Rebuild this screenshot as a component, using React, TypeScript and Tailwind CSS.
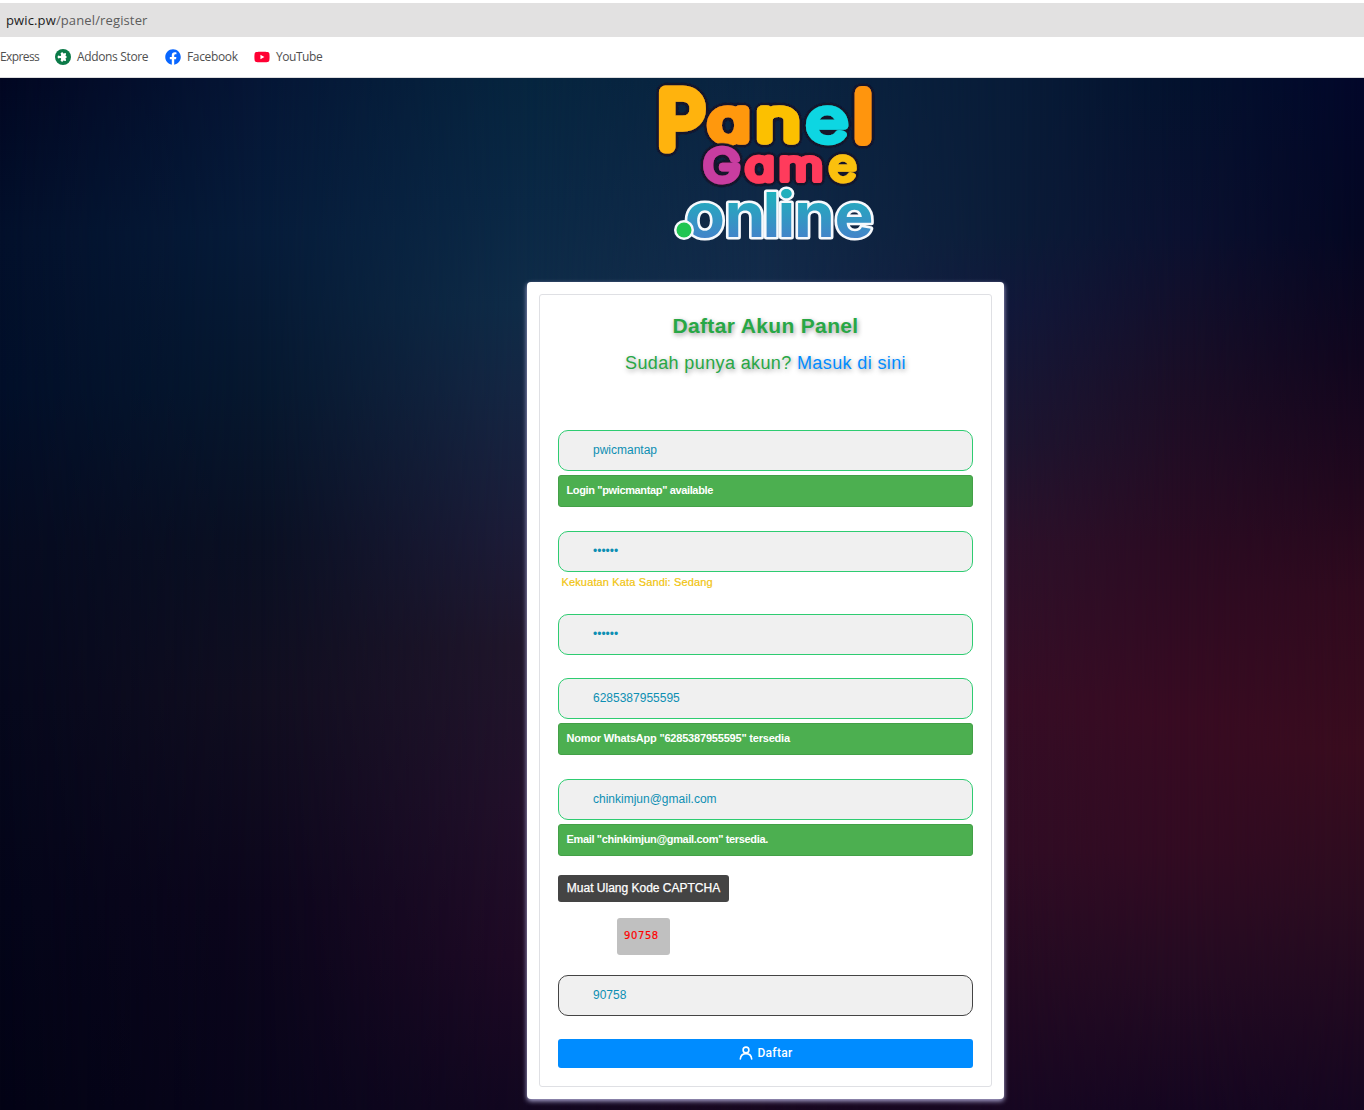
import { FaFacebook, FaYoutube } from "react-icons/fa";
import { MdExtension } from "react-icons/md";

type GlyphProps = {
  char: string;
  x: number;
  y: number;
  size: number;
  color: string;
  stroke: number;
  stretch: number;
};

const panelGlyphs: GlyphProps[] = [
  { char: "P", x: 36, y: 69, size: 76, color: "#ffb30c", stroke: 13, stretch: 1 },
  { char: "a", x: 84, y: 62, size: 55, color: "#ff980a", stroke: 11, stretch: 1.25 },
  { char: "n", x: 133, y: 62, size: 55, color: "#fcc006", stroke: 11, stretch: 1.34 },
  { char: "e", x: 182, y: 63, size: 59, color: "#08d6e2", stroke: 8.5, stretch: 1.22 },
  { char: "l", x: 218, y: 61, size: 63, color: "#ff9508", stroke: 14, stretch: 1 },
];

const gameGlyphs: GlyphProps[] = [
  { char: "G", x: 77, y: 103, size: 43, color: "#c83ca0", stroke: 7.5, stretch: 1.14 },
  { char: "a", x: 115, y: 102, size: 40, color: "#ff3b5c", stroke: 7, stretch: 1.22 },
  { char: "m", x: 156, y: 102, size: 40, color: "#ff3b5c", stroke: 7, stretch: 1.26 },
  { char: "e", x: 197.5, y: 102, size: 41, color: "#fbc00a", stroke: 6, stretch: 1.15 },
];

const onlineGlyphs = [
  { char: "o", x: 60, y: 159 },
  { char: "n", x: 100, y: 159 },
  { char: "l", x: 126.5, y: 159 },
  { char: "i", x: 141.5, y: 159 },
  { char: "n", x: 169.5, y: 159 },
  { char: "e", x: 209, y: 159 },
];

// each layer fades in from left to right over the one before it
const backdropLayers = [
  "bg-[linear-gradient(#020722_0%,#03102b_15%,#020f29_30%,#060b20_45%,#06081c_60%,#040519_80%,#030315_100%)]",
  "bg-[linear-gradient(#051636_0%,#061c3a_15%,#06182f_30%,#0a1023_45%,#110e20_60%,#0c061c_80%,#08051a_100%)] [mask-image:linear-gradient(to_right,transparent_0px,#000_260px)]",
  "bg-[linear-gradient(#06253f_0%,#0a2845_12%,#0f2c48_22%,#152744_30%,#1d1c38_45%,#20162b_55%,#22102a_70%,#1f0a25_85%,#120720_100%)] [mask-image:linear-gradient(to_right,transparent_260px,#000_527px)]",
  "bg-[linear-gradient(#0a2441_0%,#132b4a_20%,#1c1c38_45%,#2c112a_70%,#180820_100%)] [mask-image:linear-gradient(to_right,transparent_527px,#000_765px)]",
  "bg-[linear-gradient(#081c38_0%,#0b1c38_15%,#11183a_22%,#1d1530_35%,#2c112a_45%,#360d25_60%,#300c24_75%,#240a22_87%,#170722_100%)] [mask-image:linear-gradient(to_right,transparent_765px,#000_1010px)]",
  "bg-[linear-gradient(#03122e_0%,#0b1130_15%,#1b0e26_30%,#2a0b22_45%,#380b22_62%,#320b22_75%,#240b22_87%,#150620_100%)] [mask-image:linear-gradient(to_right,transparent_1010px,#000_1180px)]",
  "bg-[linear-gradient(#02072a_0%,#040722_15%,#10061e_27%,#21081d_40%,#300a1e_50%,#390c1e_65%,#2a0c20_80%,#150620_100%)] [mask-image:linear-gradient(to_right,transparent_1180px,#000_1364px)]",
];

function Glyph({ glyph }: { glyph: GlyphProps }) {
  return (
    <text
      transform={`translate(${glyph.x} ${glyph.y}) scale(${glyph.stretch} 1)`}
      textAnchor="middle"
      fontSize={glyph.size}
      fill={glyph.color}
      stroke={glyph.color}
      strokeWidth={glyph.stroke}
      strokeLinejoin="round"
      vectorEffect="non-scaling-stroke"
    >
      {glyph.char}
    </text>
  );
}

function Logo() {
  return (
    <svg
      width="240"
      height="172"
      viewBox="0 0 240 172"
      className="font-['Inter',sans-serif] [font-feature-settings:'cv11']"
    >
      <defs>
        <linearGradient
          id="online"
          gradientUnits="userSpaceOnUse"
          x1="0"
          y1="-44"
          x2="0"
          y2="0"
        >
          <stop offset="0" stopColor="#1fb0bc" />
          <stop offset="1" stopColor="#4285c9" />
        </linearGradient>
        {/* rounded dark rim behind the coloured letters */}
        <filter id="rim" x="-10%" y="-20%" width="120%" height="140%">
          <feGaussianBlur in="SourceAlpha" stdDeviation="2" result="soft" />
          <feComponentTransfer in="soft" result="grown">
            <feFuncA type="linear" slope="8" intercept="-0.4" />
          </feComponentTransfer>
          <feFlood floodColor="#12132c" />
          <feComposite in2="grown" operator="in" result="outline" />
          <feMerge>
            <feMergeNode in="outline" />
            <feMergeNode in="SourceGraphic" />
          </feMerge>
        </filter>
      </defs>
      <g filter="url(#rim)" className="font-extralight [color-interpolation-filters:sRGB]">
        {panelGlyphs.map((g) => (
          <Glyph key={g.x} glyph={g} />
        ))}
      </g>
      <g filter="url(#rim)" className="font-extralight [color-interpolation-filters:sRGB]">
        {gameGlyphs.map((g) => (
          <Glyph key={g.x} glyph={g} />
        ))}
      </g>
      <g className="font-bold" fontSize="62" paintOrder="stroke">
        {onlineGlyphs.map((g) => (
          <text
            key={g.x}
            transform={`translate(${g.x} ${g.y}) scale(1.06 1)`}
            textAnchor="middle"
            fill="url(#online)"
            stroke="#f6f9fc"
            strokeWidth="5"
            strokeLinejoin="round"
          >
            {g.char}
          </text>
        ))}
      </g>
      <circle cx="39" cy="152" r="10" fill="#f6f9fc" />
      <circle cx="39" cy="152" r="7.5" fill="#1fc551" />
    </svg>
  );
}

function BrowserBar() {
  return (
    <header className="flex flex-col bg-white pt-[3px] font-['Open_Sans',sans-serif]">
      <div className="flex h-[34px] items-center bg-[#e2e1e1] pt-px pl-1.5 text-[13px] tracking-[0.13px] text-[#5c5c5c]">
        <span className="text-[#1c1c1c]">pwic.pw</span>/panel/register
      </div>
      <nav className="flex h-[41px] items-center border-b border-[#dddddf] text-xs tracking-[-0.35px] text-[#505050]">
        <span className="w-[55px] tracking-[-0.6px]">Express</span>
        <span className="flex w-[110px] items-center gap-1.5">
          <span className="flex size-4 items-center justify-center rounded-full bg-[#0b7a48]">
            <MdExtension className="size-2.5 rotate-45 text-white" />
          </span>
          Addons Store
        </span>
        <span className="flex w-[89px] items-center gap-1.5">
          <FaFacebook className="size-4 text-[#0866ff]" />
          Facebook
        </span>
        <span className="flex items-center gap-1.5 tracking-[-0.45px]">
          <FaYoutube className="size-4 text-[#ff0033]" />
          YouTube
        </span>
      </nav>
    </header>
  );
}

function Field({ value, type = "text", border = "border-[#2ecc71]" }: {
  value: string;
  type?: string;
  border?: string;
}) {
  return (
    <input
      type={type}
      defaultValue={value}
      className={`block h-[41px] w-full rounded-[10px] border bg-[#f0f0f0] pr-3 pb-0.5 pl-[34px] text-xs text-[#0d8fb3] outline-none ${border}`}
    />
  );
}

function Notice({ text, tracking }: { text: string; tracking: string }) {
  return (
    <p
      className={`mt-1 flex h-8 items-center rounded-[3px] border border-[#43a047] bg-[#4caf50] px-[7.5px] pb-px text-[11px] font-bold text-white ${tracking}`}
    >
      {text}
    </p>
  );
}

export default function App() {
  return (
    <div className="flex h-[1110px] w-[1364px] flex-col overflow-hidden">
      <BrowserBar />
      <main className="relative isolate flex flex-1 flex-col bg-[#030315] font-['Liberation_Sans',sans-serif]">
        {backdropLayers.map((layer) => (
          <div key={layer} className={`absolute inset-0 -z-10 ${layer}`} />
        ))}
        <div className="ml-[645px] h-[204px]">
          <Logo />
        </div>
        <section className="ml-[527px] h-[817px] w-[477px] rounded bg-white p-3 shadow-[0_2px_5px_#b4b0dc]">
          <form className="h-[793px] rounded-[3px] border border-[#dfe0e4] px-[18px]">
            <h1 className="mt-[18px] text-center text-[21px] leading-[26px] font-bold tracking-[0.35px] text-[#28a745] [text-shadow:1px_2px_5px_#00000066]">
              Daftar Akun Panel
            </h1>
            <p className="mt-3 mb-[54px] text-center text-lg leading-[25px] tracking-[0.38px] text-[#28a745] [text-shadow:1px_2px_5px_#00000066]">
              Sudah punya akun? <a className="text-[#008cff]">Masuk di sini</a>
            </p>
            <Field value="pwicmantap" />
            <Notice
              text={'Login "pwicmantap" available'}
              tracking="tracking-[-0.36px]"
            />
            <div className="mt-6">
              <Field value="123456" type="password" />
              <p className="h-[42px] pt-1 pl-[3.5px] text-[11px] leading-[13px] tracking-[0.14px] text-[#f1c40f] [-webkit-text-stroke:0.2px]">
                Kekuatan Kata Sandi: Sedang
              </p>
            </div>
            <Field value="123456" type="password" />
            <div className="mt-[23px]">
              <Field value="6285387955595" />
              <Notice
                text={'Nomor WhatsApp "6285387955595" tersedia'}
                tracking="tracking-[-0.2px]"
              />
            </div>
            <div className="mt-6">
              <Field value="chinkimjun@gmail.com" />
              <Notice
                text={'Email "chinkimjun@gmail.com" tersedia.'}
                tracking="tracking-[-0.34px]"
              />
            </div>
            <button
              type="button"
              className="mt-[19px] block h-[27px] w-[171px] rounded-[3px] bg-[#444] pb-0.5 text-xs whitespace-nowrap text-white [-webkit-text-stroke:0.25px]"
            >
              Muat Ulang Kode CAPTCHA
            </button>
            <div className="mt-4 ml-[59px] h-[37px] w-[53px] rounded-[3px] bg-[#c0c0c0] pt-2.5 pl-[7px] font-['DejaVu_Sans',sans-serif] text-[10px] leading-[15px] tracking-[0.6px] text-[#ff0000] [-webkit-text-stroke:0.2px]">
              90758
            </div>
            <div className="mt-5">
              <Field value="90758" border="border-[#444]" />
            </div>
            <button
              type="button"
              className="mt-[23px] flex h-[29px] w-full items-center justify-center gap-1 rounded-[3px] bg-[#008cff] pb-px pl-px font-['Roboto',sans-serif] text-xs font-medium tracking-[0.3px] text-white"
            >
              <svg
                width="14"
                height="14"
                viewBox="0 0 14 14"
                fill="none"
                stroke="currentColor"
                strokeWidth="1.6"
                strokeLinecap="round"
              >
                <circle cx="7" cy="4" r="2.9" />
                <path d="M1.3 13C1.6 9.8 3.8 7.6 7 7.6s5.4 2.2 5.7 5.4" />
              </svg>
              Daftar
            </button>
          </form>
        </section>
      </main>
    </div>
  );
}
